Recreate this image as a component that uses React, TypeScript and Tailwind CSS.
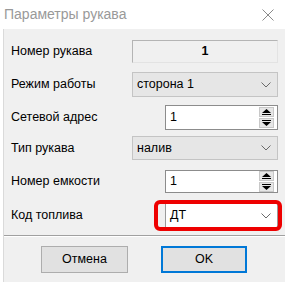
import React from 'react';

const Chevron = () => (
    <svg width="10" height="6" viewBox="0 0 10 6" className="shrink-0">
        <path d="M0.5 0.5 L5 5 L9.5 0.5" fill="none" stroke="#6a6a6a" strokeWidth="1" />
    </svg>
);

const Spin = () => (
    <div className="flex flex-col gap-[1px] mr-[3px]">
        <div className="w-[15px] h-[10px] bg-[#e6e6e6] border border-[#c8c8c8] flex items-center justify-center">
            <svg width="9" height="6" viewBox="0 0 9 6">
                <path d="M4.5 0 L9 4 L0 4 Z" fill="#000" />
                <rect x="0" y="5" width="9" height="1" fill="#000" />
            </svg>
        </div>
        <div className="w-[15px] h-[10px] bg-[#e6e6e6] border border-[#c8c8c8] flex items-center justify-center">
            <svg width="9" height="6" viewBox="0 0 9 6">
                <rect x="0" y="0" width="9" height="1" fill="#000" />
                <path d="M0 2 L9 2 L4.5 6 Z" fill="#000" />
            </svg>
        </div>
    </div>
);

const Label = ({ text }: { text: string }) => (
    <span className="flex-1 pl-[7px] text-[12.5px] text-black">{text}</span>
);

const App = () => {
    return (
        <div
            className="w-[288px] h-[282px] bg-white flex flex-col"
            style={{ fontFamily: '"Liberation Sans", Arial, sans-serif' }}>
            <div className="h-[29px] flex items-center justify-between pl-[4px] pr-[14px]">
                <span className="text-[14px] text-[#999999]">Параметры рукава</span>
                <svg width="12" height="12" viewBox="0 0 12 12">
                    <path d="M0.5 0.5 L11.5 11.5 M11.5 0.5 L0.5 11.5" stroke="#8a8a8a" strokeWidth="1" />
                </svg>
            </div>
            <div className="flex-1 mx-[3px] bg-[#f0f0f0] border-l border-[#dadada] flex flex-col pt-[11px] pr-[7px]">
                <div className="flex items-center">
                    <Label text="Номер рукава" />
                    <div className="w-[146px] h-[23px] bg-[#f0f0f0] border border-[#b4b4b4] border-b-[#e3e3e3] border-r-[#e3e3e3] flex items-center justify-center text-[12.5px] font-bold text-black">
                        1
                    </div>
                </div>
                <div className="flex items-center mt-[9px]">
                    <Label text="Режим работы" />
                    <div className="w-[146px] h-[25px] bg-[#e6e6e6] border border-[#c4c4c4] flex items-center justify-between pl-[4px] pr-[6px] text-[12.5px] text-black">
                        <span>сторона 1</span>
                        <Chevron />
                    </div>
                </div>
                <div className="flex items-center mt-[8px]">
                    <Label text="Сетевой адрес" />
                    <div className="w-[113px] h-[25px] bg-white border border-[#8c8c8c] flex items-center justify-between pl-[4px] text-[12.5px] text-black">
                        <span>1</span>
                        <Spin />
                    </div>
                </div>
                <div className="flex items-center mt-[6px]">
                    <Label text="Тип рукава" />
                    <div className="w-[146px] h-[24px] bg-[#e6e6e6] border border-[#c4c4c4] flex items-center justify-between pl-[4px] pr-[6px] text-[12.5px] text-black">
                        <span>налив</span>
                        <Chevron />
                    </div>
                </div>
                <div className="flex items-center mt-[10px]">
                    <Label text="Номер емкости" />
                    <div className="w-[113px] h-[23px] bg-white border border-[#8c8c8c] flex items-center justify-between pl-[4px] text-[12.5px] text-black">
                        <span>1</span>
                        <Spin />
                    </div>
                </div>
                <div className="flex items-center mt-[10px] relative">
                    <Label text="Код топлива" />
                    <div className="w-[113px] h-[25px] bg-white border border-[#9a9a9a] flex items-center justify-between pl-[4px] pr-[6px] text-[12.5px] text-black">
                        <span>ДТ</span>
                        <Chevron />
                    </div>
                    <div className="absolute left-[150px] right-[-4px] top-[-3px] bottom-[-3px] border-[4px] border-[#ee0000] rounded-[6px]"></div>
                </div>
                <div className="mt-[7px] -mr-[7px] h-[1px] bg-[#a0a0a0] border-b border-white box-content"></div>
                <div className="flex mt-[9px] pl-[37px] gap-[33px]">
                    <div className="w-[87px] h-[27px] bg-[#e1e1e1] border border-[#adadad] flex items-center justify-center text-[12.5px] text-black">
                        Отмена
                    </div>
                    <div className="w-[86px] h-[27px] bg-[#e1e1e1] border-2 border-[#0078d7] flex items-center justify-center text-[12.5px] text-black">
                        OK
                    </div>
                </div>
            </div>
        </div>
    );
};

export default App;
